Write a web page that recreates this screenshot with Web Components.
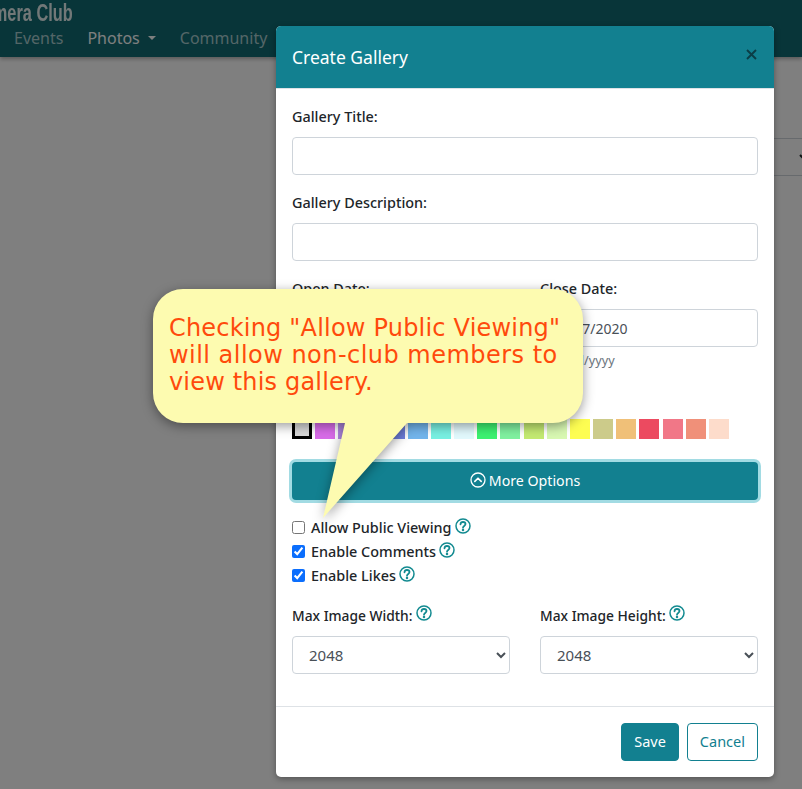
<!DOCTYPE html>
<html lang="en">
<head>
<meta charset="utf-8">
<title>Create Gallery</title>
<style>
    html, body { margin: 0; padding: 0; }
    body {
        font-family: "Noto Sans", "Open Sans", sans-serif;
        font-size: 15px;
        color: #212529;
        overflow: hidden;
    }
</style>
</head>
<body>
<cc-page>
    <cc-navbar slot="nav" brand="Camera Club">
        <cc-navlink>Events</cc-navlink>
        <cc-navlink active caret>Photos</cc-navlink>
        <cc-navlink>Community</cc-navlink>
    </cc-navbar>

    <cc-modal slot="modal" heading="Create Gallery">
        <cc-field label="Gallery Title:"><input></cc-field>
        <cc-field label="Gallery Description:"><input></cc-field>
        <cc-date-row></cc-date-row>
        <cc-swatches></cc-swatches>
        <cc-more-button>More Options</cc-more-button>
        <cc-check>Allow Public Viewing</cc-check>
        <cc-check checked>Enable Comments</cc-check>
        <cc-check checked>Enable Likes</cc-check>
        <cc-size-row></cc-size-row>
        <cc-button slot="footer" primary>Save</cc-button>
        <cc-button slot="footer">Cancel</cc-button>
    </cc-modal>

    <cc-callout slot="callout">
        <span style="letter-spacing:.2px">Checking "Allow Public Viewing"</span>
        <span style="letter-spacing:.47px">will allow non-club members to</span>
        <span style="letter-spacing:.17px">view this gallery.</span>
    </cc-callout>
</cc-page>

<script>
const TEAL = "#128090";

const helpIcon = `
    <svg class="help" width="16" height="16" viewBox="0 0 16 16" fill="none" stroke="#128a90" stroke-width="1.5" stroke-linecap="round">
        <circle cx="8" cy="8" r="7"/>
        <path d="M5.5 6.3C5.6 4.9 6.7 4 8 4c1.5 0 2.5.9 2.5 2.1 0 1.9-2.5 1.8-2.5 3.6" stroke-width="1.8"/>
        <circle cx="8" cy="12" r=".5" fill="#128a90"/>
    </svg>`;

class CcPage extends HTMLElement {
    constructor() {
        super();
        this.attachShadow({ mode: "open" }).innerHTML = `
            <style>
                :host {
                    display: block;
                    position: relative;
                    width: 802px;
                    height: 789px;
                    overflow: hidden;
                    background: #fff;
                }
                .behind {
                    display: flex;
                    justify-content: flex-end;
                    padding-top: 81px;
                }
                .behind select {
                    box-sizing: border-box;
                    width: 200px;
                    height: 38px;
                    margin-right: -11px;
                    background: #fff;
                    border: 1px solid #ced4da;
                    border-radius: 4px;
                    color: #212529;
                }
                .backdrop {
                    position: absolute;
                    inset: 0;
                    background: rgba(0, 0, 0, .5);
                }
                .dialog {
                    position: absolute;
                    inset: 0;
                    padding: 26px 0 0 276px;
                }
            </style>
            <slot name="nav"></slot>
            <div class="behind"><select aria-hidden="true"></select></div>
            <div class="backdrop"></div>
            <div class="dialog"><slot name="modal"></slot></div>
            <slot name="callout"></slot>
        `;
    }
}

class CcNavbar extends HTMLElement {
    constructor() {
        super();
        this.attachShadow({ mode: "open" }).innerHTML = `
            <style>
                :host {
                    display: block;
                    height: 57px;
                    overflow: hidden;
                    background: #106a72;
                    box-shadow: 0 2px 4px rgba(0, 0, 0, .3);
                }
                .brand {
                    height: 26px;
                    margin-left: -28px;
                    font-family: "Liberation Sans", sans-serif;
                    font-size: 24px;
                    font-weight: 700;
                    line-height: 25px;
                    white-space: nowrap;
                    color: #e4f0f0;
                    transform: scaleX(.68);
                    transform-origin: left center;
                }
                nav {
                    display: flex;
                    gap: 24px;
                    padding: 0 0 0 14px;
                }
            </style>
            <div class="brand"></div>
            <nav><slot></slot></nav>
        `;
    }

    connectedCallback() {
        this.shadowRoot.querySelector(".brand").textContent = this.getAttribute("brand");
    }
}

class CcNavlink extends HTMLElement {
    constructor() {
        super();
        this.attachShadow({ mode: "open" }).innerHTML = `
            <style>
                :host {
                    display: flex;
                    align-items: center;
                    gap: 8px;
                    height: 24px;
                    font-size: 16px;
                    color: #a8cccf;
                }
                :host([active]) { color: #fbffff; }
                .caret {
                    display: none;
                    border-top: 4px solid currentColor;
                    border-left: 4px solid transparent;
                    border-right: 4px solid transparent;
                }
                :host([caret]) .caret { display: block; }
            </style>
            <slot></slot><span class="caret"></span>
        `;
    }
}

class CcModal extends HTMLElement {
    constructor() {
        super();
        this.attachShadow({ mode: "open" }).innerHTML = `
            <style>
                :host {
                    display: block;
                    width: 498px;
                    height: 751px;
                    background: #fff;
                    border-radius: 5px;
                    box-shadow: 0 2px 6px rgba(0, 0, 0, .35);
                    overflow: hidden;
                }
                header {
                    display: flex;
                    align-items: center;
                    justify-content: space-between;
                    box-sizing: border-box;
                    height: 63px;
                    padding: 0 17px 0 16px;
                    color: #fff;
                    background: ${TEAL};
                    border-bottom: 1px solid #dee2e6;
                }
                h2 { margin: 0; font-size: 17.5px; font-weight: 400; }
                .close { display: block; margin-top: -5px; }
                main { height: 617px; box-sizing: border-box; padding: 16px; }
                footer {
                    display: flex;
                    justify-content: flex-end;
                    gap: 8px;
                    padding: 16px;
                    border-top: 1px solid #dee2e6;
                }
            </style>
            <header>
                <h2></h2>
                <svg class="close" width="11" height="11" viewBox="0 0 11 11" stroke="#0b3d46" stroke-width="1.9">
                    <path d="M1 1l9 9M10 1l-9 9"/>
                </svg>
            </header>
            <main><slot></slot></main>
            <footer><slot name="footer"></slot></footer>
        `;
    }

    connectedCallback() {
        this.shadowRoot.querySelector("h2").textContent = this.getAttribute("heading");
    }
}

class CcField extends HTMLElement {
    constructor() {
        super();
        this.attachShadow({ mode: "open" }).innerHTML = `
            <style>
                :host { display: block; margin-bottom: 16px; }
                label {
                    display: flex;
                    align-items: center;
                    gap: 3px;
                    box-sizing: border-box;
                    height: 24px;
                    padding-bottom: var(--label-lift, 2px);
                    margin-bottom: var(--label-gap, 8px);
                    font-weight: 500;
                    font-size: var(--label-size, 14.4px);
                }
                ::slotted(input), ::slotted(select) {
                    box-sizing: border-box;
                    display: block;
                    width: 100%;
                    height: 38px;
                    padding: 6px 12px;
                    font: inherit;
                    color: #495057;
                    background: #fff;
                    border: 1px solid #ced4da;
                    border-radius: 4px;
                }
                ::slotted(input) { font-size: 14px; }
                .hint { margin-top: 3px; height: 21px; font-size: 12.7px; line-height: 20px; color: #6c757d; }
            </style>
            <label><span class="text"></span><span class="icon"></span></label>
            <slot></slot>
            <div class="hint" hidden></div>
        `;
    }

    connectedCallback() {
        const root = this.shadowRoot;
        root.querySelector(".text").textContent = this.getAttribute("label");
        root.querySelector(".icon").innerHTML = this.hasAttribute("help") ? helpIcon : "";
        if (this.hasAttribute("hint")) {
            const hint = root.querySelector(".hint");
            hint.hidden = false;
            hint.style.display = "block";
            hint.textContent = this.getAttribute("hint");
        }
    }
}

class CcDateRow extends HTMLElement {
    constructor() {
        super();
        this.attachShadow({ mode: "open" }).innerHTML = `
            <style>
                :host { display: grid; grid-template-columns: 218px 218px; gap: 30px; }
            </style>
            <cc-field label="Open Date:"><input></cc-field>
            <cc-field label="Close Date:" hint="mm/dd/yyyy"><input value="12/17/2020"></cc-field>
        `;
    }
}

class CcSizeRow extends HTMLElement {
    constructor() {
        super();
        this.attachShadow({ mode: "open" }).innerHTML = `
            <style>
                :host {
                    display: grid;
                    grid-template-columns: 218px 218px;
                    gap: 30px;
                    margin-top: 16px;
                    --label-size: 13.8px;
                    --label-gap: 9px;
                    --label-lift: 0px;
                }
            </style>
            <cc-field label="Max Image Width:" help><select><option>2048</option></select></cc-field>
            <cc-field label="Max Image Height:" help><select><option>2048</option></select></cc-field>
        `;
    }
}

class CcSwatches extends HTMLElement {
    constructor() {
        super();
        const colors = ["#d8d8d8", "#d86ce8", "#b48ae6", "#8c7ce0", "#6f80de", "#72b5ec", "#78f0e2", "#e2f9fd",
            "#3df271", "#80f1a0", "#c4ea72", "#d8f8b2", "#fdfd52", "#cccb8a", "#f0c078", "#ec4a60", "#f17787", "#f09079", "#fddccb"];
        this.attachShadow({ mode: "open" }).innerHTML = `
            <style>
                :host { display: flex; gap: 3.17px; padding-top: 32px; margin-bottom: 23px; }
                span { box-sizing: border-box; width: 20px; height: 20px; }
                span.on { border: 3px solid #000; }
            </style>
            ${ colors.map((c, i) => `<span class="${ i === 0 ? "on" : "" }" style="background:${ c }"></span>`).join("") }
        `;
    }
}

class CcMoreButton extends HTMLElement {
    constructor() {
        super();
        this.attachShadow({ mode: "open" }).innerHTML = `
            <style>
                :host {
                    display: flex;
                    align-items: center;
                    justify-content: center;
                    gap: 3px;
                    box-sizing: border-box;
                    height: 38px;
                    padding-bottom: 2px;
                    margin-bottom: 15px;
                    font-size: 14.2px;
                    color: #fff;
                    background: ${TEAL};
                    border-radius: 4px;
                    box-shadow: 0 0 0 3px #a2dbe3;
                }
            </style>
            <svg width="16" height="16" viewBox="0 0 16 16" fill="none" stroke="#fff" stroke-width="1.3" stroke-linecap="round" stroke-linejoin="round">
                <circle cx="8" cy="8" r="7"/>
                <path d="M4.8 9.4L8 6.2l3.2 3.2" stroke-width="1.6"/>
            </svg>
            <slot></slot>
        `;
    }
}

class CcCheck extends HTMLElement {
    constructor() {
        super();
        this.attachShadow({ mode: "open" }).innerHTML = `
            <style>
                :host {
                    display: flex;
                    align-items: center;
                    height: 24px;
                    font-weight: 500;
                    font-size: 14.4px;
                }
                input {
                    width: 13px;
                    height: 13px;
                    margin: 0 6px 0 0;
                    accent-color: #0b6efd;
                }
                .help { margin: -2px 0 0 3px; }
            </style>
            <input type="checkbox">
            <slot></slot>
            ${ helpIcon }
        `;
    }

    connectedCallback() {
        this.shadowRoot.querySelector("input").checked = this.hasAttribute("checked");
    }
}

class CcButton extends HTMLElement {
    constructor() {
        super();
        this.attachShadow({ mode: "open" }).innerHTML = `
            <style>
                :host {
                    display: flex;
                    align-items: center;
                    box-sizing: border-box;
                    height: 38px;
                    padding: 0 12px 2px;
                    font-size: 14.5px;
                    color: ${TEAL};
                    border: 1px solid ${TEAL};
                    border-radius: 4px;
                }
                :host([primary]) { color: #fff; background: ${TEAL}; }
            </style>
            <slot></slot>
        `;
    }
}

class CcCallout extends HTMLElement {
    constructor() {
        super();
        this.attachShadow({ mode: "open" }).innerHTML = `
            <style>
                :host {
                    position: absolute;
                    left: 153px;
                    top: 289px;
                    box-sizing: border-box;
                    width: 430px;
                    height: 134px;
                    padding: 26px 0 0 16px;
                    font-family: "DejaVu Sans", sans-serif;
                    font-size: 24px;
                    line-height: 27px;
                    white-space: nowrap;
                    color: #ff4a0c;
                }
                svg {
                    position: absolute;
                    left: 0;
                    top: 0;
                    overflow: visible;
                    filter: drop-shadow(0 3px 6px rgba(0, 0, 0, .4));
                }
                .text { position: relative; display: flex; flex-direction: column; }
            </style>
            <svg width="430" height="134" viewBox="0 0 430 134">
                <path fill="#fdfbb0" d="M30 0H400a30 30 0 0 1 30 30V104a30 30 0 0 1-30 30H254L170 229 192 134H30A30 30 0 0 1 0 104V30A30 30 0 0 1 30 0Z"/>
            </svg>
            <div class="text"><slot></slot></div>
        `;
    }
}

customElements.define("cc-page", CcPage);
customElements.define("cc-navbar", CcNavbar);
customElements.define("cc-navlink", CcNavlink);
customElements.define("cc-modal", CcModal);
customElements.define("cc-field", CcField);
customElements.define("cc-date-row", CcDateRow);
customElements.define("cc-size-row", CcSizeRow);
customElements.define("cc-swatches", CcSwatches);
customElements.define("cc-more-button", CcMoreButton);
customElements.define("cc-check", CcCheck);
customElements.define("cc-button", CcButton);
customElements.define("cc-callout", CcCallout);
</script>
</body>
</html>
